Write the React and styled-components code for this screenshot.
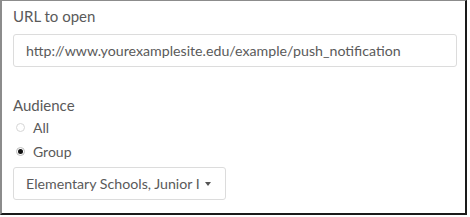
import React, {useState} from 'react';
import styled, {createGlobalStyle} from 'styled-components';

const Global = createGlobalStyle`
  body {
    margin: 0;
    background: #ffffff;
    font-family: Lato, "Open Sans", sans-serif;
  }
`;

const Frame = styled.div`
  box-sizing: border-box;
  width: 467px;
  height: 215px;
  border-left: 2px solid #8c8c8c;
  border-top: 1px solid #8c8c8c;
  border-right: 2px solid #1a1a1a;
  border-bottom: 2px solid #1a1a1a;
  padding: 5px 8px 0 11px;
  color: #5a5a5a;
`;

const Label = styled.div`
  font-size: 15px;
  line-height: 20px;
  color: #5a5a5a;
  margin-bottom: ${(props) => props.gap || 8}px;
`;

const TextInput = styled.input`
  box-sizing: border-box;
  display: block;
  width: 444px;
  height: 33px;
  padding: 0 12px;
  border: 1px solid #dcdcdc;
  border-radius: 3px;
  font-family: Lato, "Open Sans", sans-serif;
  font-size: 14.2px;
  color: #5a5a5a;
  outline: none;
  margin-bottom: 28px;
`;

const Options = styled.div`
  display: flex;
  flex-direction: column;
  gap: 4px;
  margin-bottom: 6px;
`;

const Option = styled.label`
  display: flex;
  align-items: center;
  gap: 8px;
  height: 20px;
  font-size: 14px;
  color: #5a5a5a;
  cursor: pointer;
  padding-left: 3px;
`;

const Dot = styled.span`
  box-sizing: border-box;
  width: 9px;
  height: 9px;
  border-radius: 50%;
  border: 1px solid ${(props) => (props.on ? '#bdbdbd' : '#d6d6d6')};
  display: flex;
  align-items: center;
  justify-content: center;

  &::after {
    content: '';
    width: 5px;
    height: 5px;
    border-radius: 50%;
    background: ${(props) => (props.on ? '#111111' : 'transparent')};
  }
`;

const Select = styled.div`
  box-sizing: border-box;
  width: 213px;
  height: 33px;
  border: 1px solid #dcdcdc;
  border-radius: 3px;
  display: flex;
  align-items: center;
  padding: 0 6px 0 12px;
  font-size: 14.2px;
  color: #5a5a5a;
  white-space: nowrap;
`;

const Caret = styled.span`
  flex-shrink: 0;
  width: 0;
  height: 0;
  margin-left: 5px;
  border-left: 3.5px solid transparent;
  border-right: 3.5px solid transparent;
  border-top: 4px solid #555555;
`;

function App() {
  const [audience, setAudience] = useState('group');

  return (
      <>
        <Global/>
        <Frame>
          <Label>URL to open</Label>
          <TextInput defaultValue="http://www.yourexamplesite.edu/example/push_notification"/>

          <Label gap={2}>Audience</Label>
          <Options>
            <Option onClick={() => setAudience('all')}>
              <Dot on={audience === 'all'}/>All
            </Option>
            <Option onClick={() => setAudience('group')}>
              <Dot on={audience === 'group'}/>Group
            </Option>
          </Options>

          <Select>
            <span>Elementary Schools, Junior I</span>
            <Caret/>
          </Select>
        </Frame>
      </>
  );
}

export default App;
